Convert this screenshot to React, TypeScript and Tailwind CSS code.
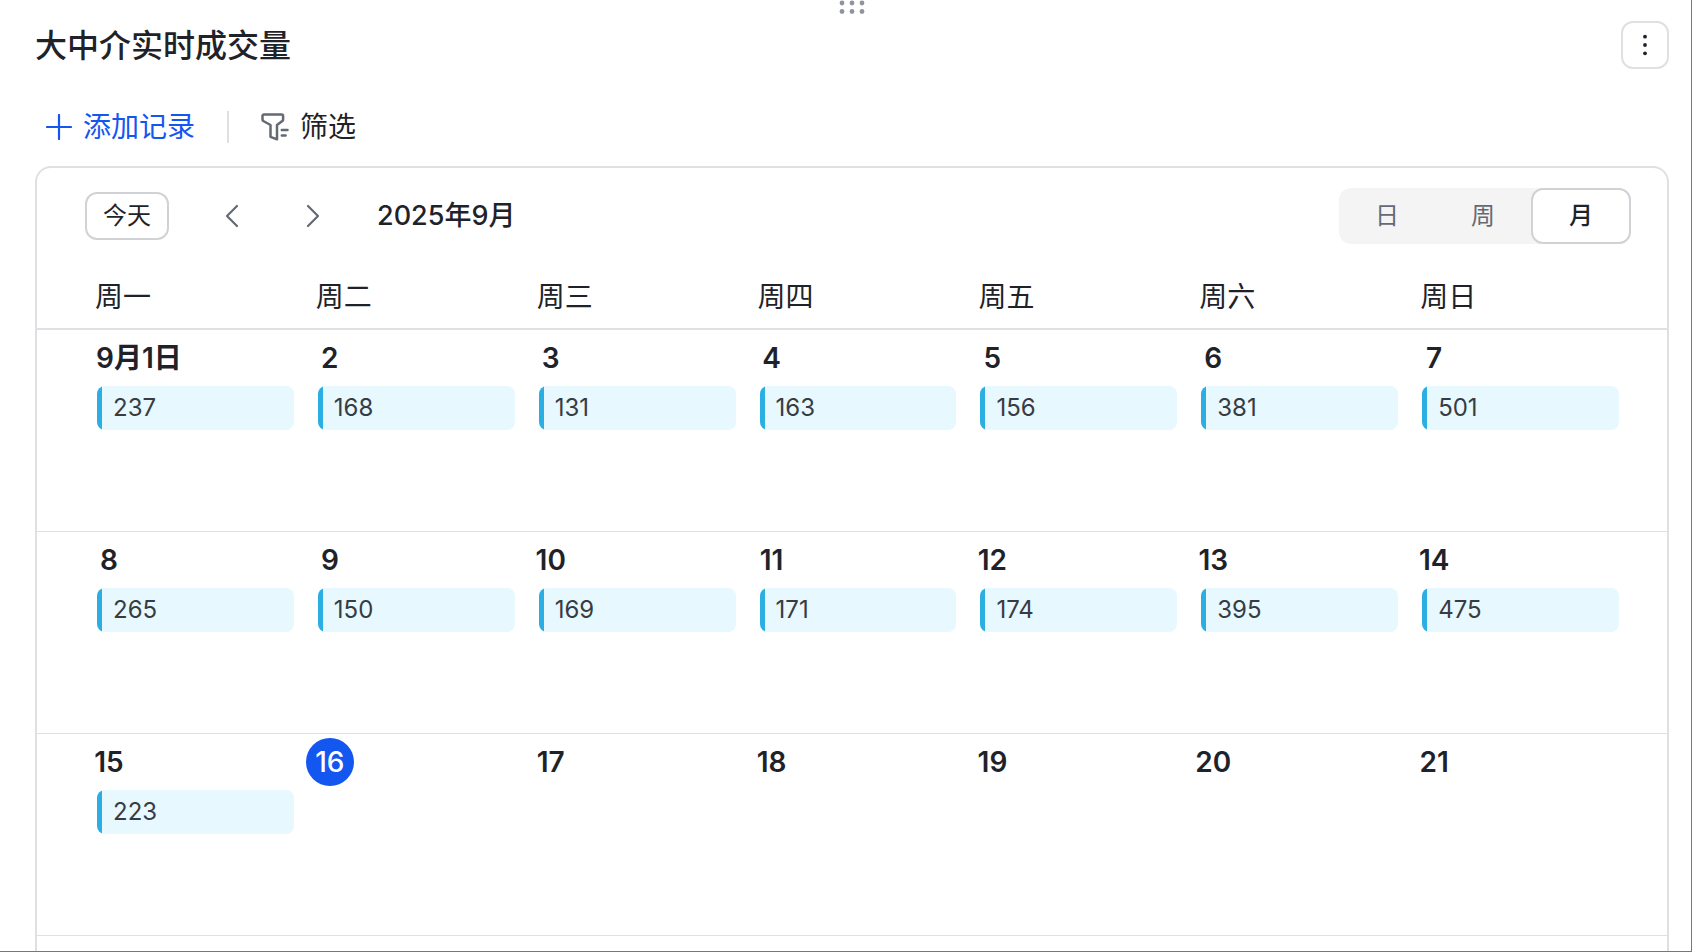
import { useState } from "react";

const weekdays = ["周一", "周二", "周三", "周四", "周五", "周六", "周日"];

const today = 16;

const weeks = [
  [1, 2, 3, 4, 5, 6, 7],
  [8, 9, 10, 11, 12, 13, 14],
  [15, 16, 17, 18, 19, 20, 21],
];

const records: Record<number, number> = {
  1: 237,
  2: 168,
  3: 131,
  4: 163,
  5: 156,
  6: 381,
  7: 501,
  8: 265,
  9: 150,
  10: 169,
  11: 171,
  12: 174,
  13: 395,
  14: 475,
  15: 223,
};

function DragHandle() {
  return (
    <svg width="28" height="16" viewBox="0 0 28 16" fill="#8f959e" className="mx-auto">
      {[4, 14, 24].map((x) => (
        <g key={x}>
          <circle cx={x} cy="3" r="2.4" />
          <circle cx={x} cy="11.5" r="2.4" />
        </g>
      ))}
    </svg>
  );
}

function PlusIcon() {
  return (
    <svg width="26" height="26" viewBox="0 0 26 26" fill="none" stroke="currentColor" strokeWidth="2.2" strokeLinecap="round">
      <path d="M13 1v24M1 13h24" />
    </svg>
  );
}

function FilterIcon() {
  return (
    <svg
      width="28"
      height="28"
      viewBox="0 0 28 28"
      fill="none"
      stroke="#646a73"
      strokeWidth="2.5"
      strokeLinejoin="round"
      strokeLinecap="round"
    >
      <path d="M3 1.5h17.500c1 0 1.600.6 1.600 1.600v3.300c0 .6-.3 1.200-.8 1.600l-5.300 4v14.300l-6.500-2.500V12L2.300 8c-.5-.4-.8-1-.8-1.600V3.100c0-1 .6-1.600 1.500-1.600z" />
      <path d="M20.800 17h5.700M20.800 22.500h3.800" />
    </svg>
  );
}

function Chevron({ d }: { d: string }) {
  return (
    <svg
      width="24"
      height="24"
      viewBox="0 0 24 24"
      fill="none"
      stroke="#646a73"
      strokeWidth="2.2"
      strokeLinecap="round"
      strokeLinejoin="round"
    >
      <path d={d} />
    </svg>
  );
}

function DayCell({ day }: { day: number }) {
  return (
    <td className="block pt-1">
      {day === 1 ? (
        <div className="flex h-12 items-center px-[11px] text-[28px] font-semibold">9月1日</div>
      ) : day === today ? (
        <div className="flex size-12 items-center justify-center rounded-full bg-[#1456f0] text-[28px] font-medium text-white">
          {day}
        </div>
      ) : (
        <div className="flex size-12 items-center justify-center text-[28px] font-semibold">{day}</div>
      )}
      {records[day] && (
        <div className="mx-3 mt-1 flex h-11 overflow-hidden rounded-lg bg-[#e7f8ff] text-[#373c43]">
          <span className="w-[5px] bg-[#2bafe2]" />
          <span className="self-center pl-[11px] text-2xl">{records[day]}</span>
        </div>
      )}
    </td>
  );
}

export default function App() {
  const [view, setView] = useState("月");

  return (
    <div className="flex h-screen flex-col overflow-hidden border-r border-b border-[#777] bg-white pr-[22px] pl-[35px] font-[Inter,'Noto_Sans_CJK_SC',sans-serif] text-[#1f2329]">
      <DragHandle />

      <header className="flex items-center justify-between pt-1">
        <h1 className="pt-0.5 text-[32px] leading-12 font-medium">大中介实时成交量</h1>
        <button
          aria-label="更多"
          className="flex size-12 items-center justify-center rounded-xl border-2 border-[#dee0e3]"
        >
          <svg width="4" height="22" viewBox="0 0 4 22" fill="#1f2329">
            <circle cx="2" cy="2.7" r="1.900" />
            <circle cx="2" cy="11" r="1.900" />
            <circle cx="2" cy="19.300" r="1.900" />
          </svg>
        </button>
      </header>

      <div className="mt-[35px] flex h-11 items-center px-[11px] text-[28px]">
        <button className="flex items-center gap-[11px] text-[#1456f0]">
          <PlusIcon />
          添加记录
        </button>
        <span className="mx-8 h-8 w-0.5 bg-[#dee0e3]" />
        <button className="flex items-center gap-[11px]">
          <FilterIcon />
          筛选
        </button>
      </div>

      <main className="mt-[17px] flex-1 rounded-t-2xl border-2 border-b-0 border-[#dee0e3]">
        <div className="flex items-center justify-between pt-5 pr-9 pl-12">
          <div className="flex items-center">
            <button className="h-12 w-[84px] rounded-xl border-2 border-[#d0d3d6] text-2xl leading-none">今天</button>
            <button aria-label="上个月" className="ml-[51px]">
              <Chevron d="M17 2 7 12l10 10" />
            </button>
            <button aria-label="下个月" className="ml-[57px]">
              <Chevron d="m7 2 10 10L7 22" />
            </button>
            <h2 className="ml-[52px] text-[27px] font-medium">2025年9月</h2>
          </div>

          <div className="flex h-14 rounded-xl bg-[#f4f4f5]">
            {["日", "周", "月"].map((name) => (
              <button
                key={name}
                onClick={() => setView(name)}
                className={
                  name === view
                    ? "w-[100px] rounded-xl border-2 border-[#d0d3d6] bg-white text-2xl leading-none font-medium"
                    : "w-24 text-2xl leading-none text-[#646a73]"
                }
              >
                {name}
              </button>
            ))}
          </div>
        </div>

        <table className="block">
          <thead className="block">
            <tr className="grid h-[86px] grid-cols-7 items-center border-b-2 border-[#dee0e3] pt-[22px] pr-9 pl-12">
              {weekdays.map((name) => (
                <th key={name} className="px-[10px] text-left text-[28px] font-normal">
                  {name}
                </th>
              ))}
            </tr>
          </thead>
          <tbody className="block">
            {weeks.map((week) => (
              <tr key={week[0]} className="grid min-h-[202px] grid-cols-7 border-b border-[#dee0e3] pr-9 pl-12">
                {week.map((day) => (
                  <DayCell key={day} day={day} />
                ))}
              </tr>
            ))}
          </tbody>
        </table>
      </main>
    </div>
  );
}
